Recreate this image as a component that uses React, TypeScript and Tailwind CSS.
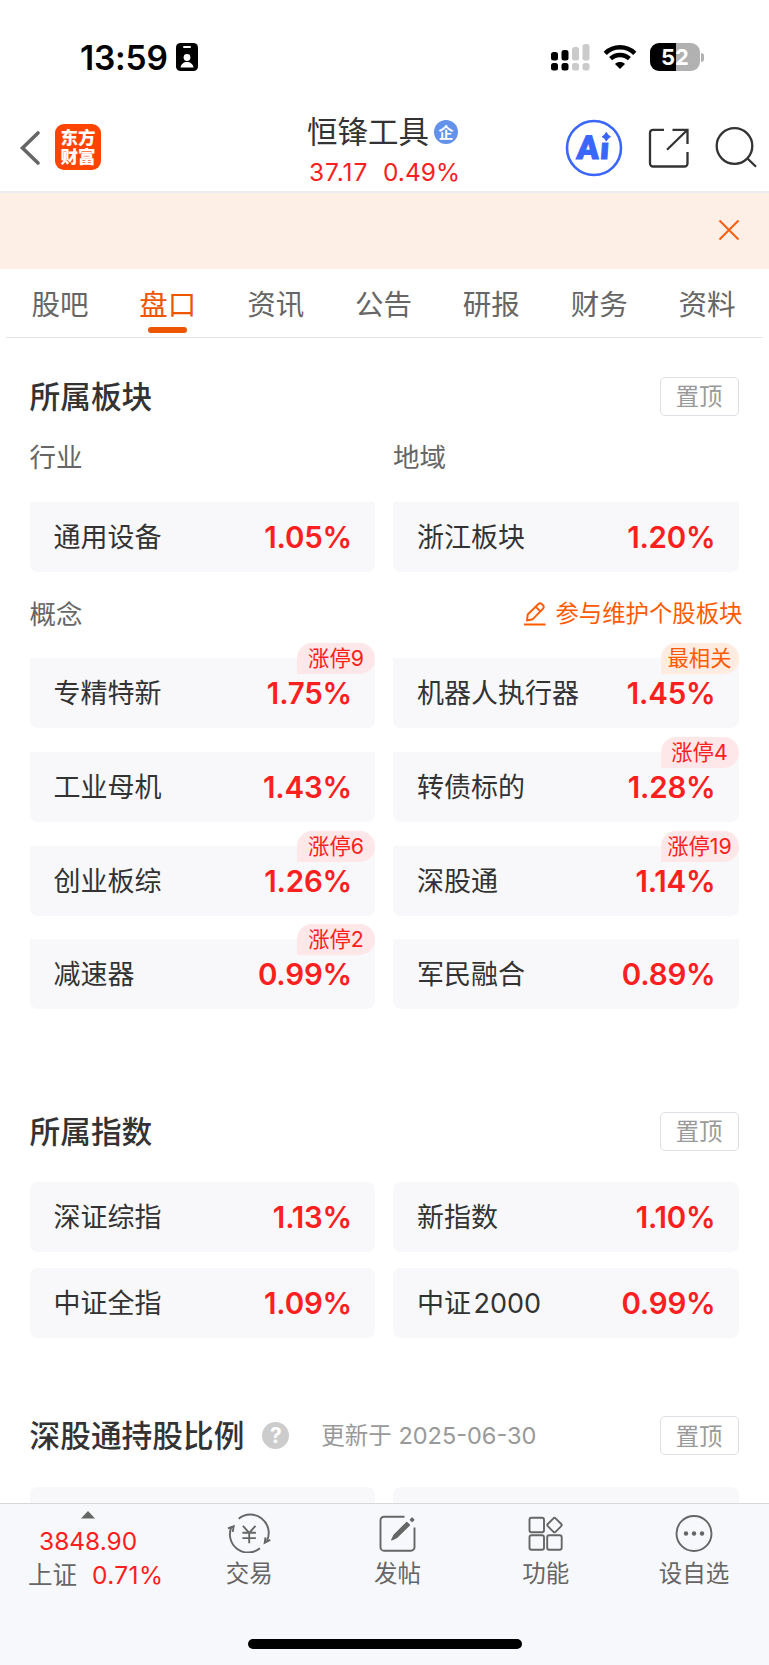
import type { ReactNode } from "react";

type Board = { name: string; change: string; tag?: string; hot?: boolean };

const tabs = ["股吧", "盘口", "资讯", "公告", "研报", "财务", "资料"];

const sectors: Board[] = [
  { name: "通用设备", change: "1.05%" },
  { name: "浙江板块", change: "1.20%" },
];

const concepts: Board[] = [
  { name: "专精特新", change: "1.75%", tag: "涨停9" },
  { name: "机器人执行器", change: "1.45%", tag: "最相关", hot: true },
  { name: "工业母机", change: "1.43%" },
  { name: "转债标的", change: "1.28%", tag: "涨停4" },
  { name: "创业板综", change: "1.26%", tag: "涨停6" },
  { name: "深股通", change: "1.14%", tag: "涨停19" },
  { name: "减速器", change: "0.99%", tag: "涨停2" },
  { name: "军民融合", change: "0.89%" },
];

const indexes: Board[] = [
  { name: "深证综指", change: "1.13%" },
  { name: "新指数", change: "1.10%" },
  { name: "中证全指", change: "1.09%" },
  { name: "中证\u200a2000", change: "0.99%" },
];

function StatusBar() {
  return (
    <div className="flex h-[105px] items-start pl-[80px] pr-[65px] pt-[37px] text-black">
      <span className="w-[96px] pt-px text-[33.500px] font-semibold leading-[40px] tracking-[-0.200px]">13:59</span>
      <svg className="mt-[6px]" width="22" height="28" viewBox="0 0 22 28">
        <rect width="22" height="28" rx="4.500" fill="#000" />
        <rect x="7" y="3" width="8" height="2" rx="1" fill="#fff" />
        <circle cx="11" cy="14.500" r="3.400" fill="#fff" />
        <path d="M4.500 24.500c.6-3.600 3.300-5.500 6.500-5.500s5.900 1.900 6.500 5.500z" fill="#fff" />
      </svg>
      <div className="ml-auto flex items-start pt-[6px]">
        <svg width="39" height="28" viewBox="0 0 39 28">
          <g fill="#000">
            <rect x="0" y="9" width="7" height="8.500" rx="2.500" />
            <rect x="10.500" y="7" width="7" height="10.500" rx="2.500" />
            <rect x="0" y="20" width="7" height="7.500" rx="2.500" />
            <rect x="10.500" y="20" width="7" height="7.500" rx="2.500" />
          </g>
          <g fill="#cacaca">
            <rect x="21" y="4" width="7" height="13.500" rx="2.500" />
            <rect x="31.500" y="1" width="7" height="16.500" rx="2.500" />
            <rect x="21" y="20" width="7" height="7.500" rx="2.500" />
            <rect x="31.500" y="20" width="7" height="7.500" rx="2.500" />
          </g>
        </svg>
        <svg className="ml-[13px] mt-[1px]" width="34" height="26" viewBox="0 0 34 26">
          <path d="M2.200 9.300C10.500 1.300 23.500 1.300 31.800 9.300" fill="none" stroke="#000" strokeWidth="4.600" />
          <path d="M7.600 14.700c5.300-5 13.500-5 18.800 0" fill="none" stroke="#000" strokeWidth="4.400" />
          <path d="M17 25l-5-5c2.800-2.600 7.200-2.600 10 0z" fill="#000" />
        </svg>
        <div className="ml-[13px] flex items-center">
          <div className="flex h-[28px] w-[50px] items-center justify-center rounded-[9px] bg-[linear-gradient(90deg,#000_52%,#b1b1b1_52%)] text-[22px] font-bold leading-[28px] text-white">
            52
          </div>
          <div className="ml-[1px] h-[9px] w-[3px] rounded-r-full bg-[#b1b1b1]" />
        </div>
      </div>
    </div>
  );
}

function Header() {
  return (
    <div className="flex h-[88px] shrink-0 items-start border-b-2 border-[#ececf0]">
      <svg className="ml-[18px] mt-[25px]" width="24" height="36" viewBox="0 0 24 36" fill="none" stroke="#666" strokeWidth="3.600">
        <path d="M20 3L4.500 18L20 33" strokeLinecap="round" />
      </svg>
      <div className="ml-[13px] mt-[19px] flex h-[46px] w-[46px] flex-col items-center justify-center rounded-[9px] bg-[#ff4400] text-[17.500px] font-black leading-[19px] text-white">
        <span>东方</span>
        <span>财富</span>
      </div>
      <div className="ml-[206px] w-[153px] pt-[7px]">
        <div className="flex h-[40px] items-center text-[30.500px] leading-[40px] text-[#333]">
          <span className="whitespace-nowrap">恒锋工具</span>
          <span className="ml-[5px] flex h-[24px] w-[24px] shrink-0 items-center justify-center rounded-full bg-[#6492ea] text-[15px] font-bold leading-none text-white">
            企
          </span>
        </div>
        <div className="flex h-[40px] items-center justify-between pl-[2px] text-[24.500px] leading-[40px] text-[#fa2020]">
          <span className="tracking-[0.900px]">37.17</span>
          <span>0.49%</span>
        </div>
      </div>
      <svg className="ml-[105px] mt-[14px]" width="58" height="58" viewBox="565 119 58 58">
        <circle cx="594" cy="148" r="27" fill="none" stroke="#3a66fb" strokeWidth="2.600" />
        <g transform="translate(576 158.500) skewX(-4)">
          <text x="0" y="0" className="font-['Roboto'] text-[33px] font-black" fill="#3a66fb" stroke="#3a66fb" strokeWidth="1">
            A<tspan dx="1">i</tspan>
          </text>
        </g>
        <rect x="600" y="131" width="14" height="11.500" fill="#fff" />
        <path d="M606.300 132.300q1.200 3.200 4.200 4.400-3 1.200-4.200 4.400-1.200-3.200-4.200-4.400 3-1.200 4.200-4.400z" fill="#3a66fb" stroke="#3a66fb" strokeWidth="1" />
      </svg>
      <svg className="ml-[25px] mt-[22px]" width="42" height="42" viewBox="648 127 42 42" fill="none" stroke="#333" strokeWidth="2.300">
        <path d="M664 129.800h-11a3 3 0 0 0-3 3v30.700a3 3 0 0 0 3 3h31.500a3 3 0 0 0 3-3V152" />
        <path d="M672.500 129.800h15V144M687.500 129.800L667 149.800" />
      </svg>
      <svg className="ml-[25px] mt-[21px]" width="44" height="44" viewBox="715 126 44 44" fill="none" stroke="#333" strokeWidth="2.300">
        <circle cx="734.500" cy="146" r="17.800" />
        <path d="M747.500 158.500l8.500 8.300" />
      </svg>
    </div>
  );
}

function SectionTitle({ title, children }: { title: string; children?: ReactNode }) {
  return (
    <div className="flex h-[40px] items-center">
      <h2 className="pt-px text-[30.700px] font-medium leading-[40px] text-[#333]">{title}</h2>
      {children}
      <button className="ml-auto h-[39px] w-[79px] rounded-[5px] border border-[#dfdfe5] pt-px text-[23.300px] leading-[35px] text-[#999]">
        置顶
      </button>
    </div>
  );
}

function BoardCard({ name, change, tag, hot, rounded }: Board & { rounded?: boolean }) {
  return (
    <div
      className={`relative flex h-[70px] items-center justify-between bg-[#f8f8fb] pl-[24px] pr-[23px] ${
        rounded ? "rounded-[8px]" : "rounded-b-[8px]"
      }`}
    >
      <span className="pt-[2px] text-[27px] leading-[40px] text-[#333]">{name}</span>
      <span className="text-[29.500px] font-semibold leading-[40px] tracking-[-0.200px] text-[#fa2020]">{change}</span>
      {tag && (
        <span
          className={`absolute -top-[15px] right-0 h-[31px] w-[78px] rounded-t-[15px] rounded-br-[15px] text-center text-[21.300px] leading-[31px] ${
            hot ? "bg-[#ffece1] text-[#ff5a00]" : "bg-[#fee7e8] text-[#fa2020]"
          }`}
        >
          {tag}
        </span>
      )}
    </div>
  );
}

function NavItem({ label, children }: { label: string; children: ReactNode }) {
  return (
    <div className="flex w-[148.300px] flex-col items-center pt-[9px]">
      <svg width="44" height="40" viewBox="0 0 44 40" fill="none" stroke="#666" strokeWidth="1.900">
        {children}
      </svg>
      <span className="mt-[4px] text-[23.500px] leading-[34px] text-[#666]">{label}</span>
    </div>
  );
}

function BottomBar() {
  return (
    <div className="flex h-[162px] shrink-0 flex-col border-t border-[#d6d7da] bg-[#f7f8fb]">
      <div className="flex h-[135px]">
        <div className="flex w-[175px] flex-col pt-[7px]">
          <svg className="ml-[81px]" width="14" height="8" viewBox="0 0 14 8">
            <path d="M7 0l7 7.500H0z" fill="#666" />
          </svg>
          <span className="ml-[39px] mt-[5px] text-[24.500px] leading-[34px] text-[#fa2020]">3848.90</span>
          <div className="flex pl-[28px] text-[24.500px] leading-[34px]">
            <span className="w-[64px] text-[#666]">上证</span>
            <span className="tracking-[0.400px] text-[#fa2020]">0.71%</span>
          </div>
        </div>
        <NavItem label="交易">
          <g transform="translate(-.6 .8)">
            <path d="M12.300 5A18.300 18.300 0 0 1 40.500 27M43.800 26l-5.500 3 .8-5.500M33.500 34.500A18.300 18.300 0 0 1 5.300 12.500M1.500 14.500l5.800-2-1 5.500" />
            <path d="M16.500 12l6.300 7 6.300-7M22.800 19V29.500M16 19h13.500M16 24.300h13.500" />
          </g>
        </NavItem>
        <NavItem label="发帖">
          <path d="M29.500 3.700H9a3.500 3.500 0 0 0-3.500 3.500v27a3.500 3.500 0 0 0 3.500 3.500h27a3.500 3.500 0 0 0 3.500-3.500V14.500" />
          <path d="M16.700 27l2.200-4.800L31.800 9.300l2.700 2.700-13 12.800zM35.300 6.800l1.800-1.800 1.800 1.800-1.800 1.800z" fill="#666" strokeWidth="1.200" strokeLinejoin="round" />
        </NavItem>
        <NavItem label="功能">
          <rect x="5.500" y="4.800" width="14.500" height="14.500" rx="2" />
          <rect x="5.500" y="22.300" width="14.500" height="14.500" rx="2" />
          <rect x="23.200" y="22.300" width="14.500" height="14.500" rx="2" />
          <rect x="25" y="6.600" width="11" height="11" rx="1.500" transform="rotate(45 30.500 12.100)" />
        </NavItem>
        <NavItem label="设自选">
          <circle cx="22" cy="20.500" r="17.500" />
          <g fill="#666" stroke="none">
            <circle cx="14" cy="20.500" r="2.200" />
            <circle cx="22" cy="20.500" r="2.200" />
            <circle cx="30" cy="20.500" r="2.200" />
          </g>
        </NavItem>
      </div>
      <div className="mx-auto h-[10px] w-[274px] rounded-full bg-black" />
    </div>
  );
}

export default function App() {
  return (
    <div className="flex h-[1665px] w-[769px] flex-col overflow-hidden bg-white font-['Inter','Noto_Sans_CJK_SC',sans-serif]">
      <StatusBar />
      <Header />

      <div className="flex h-[76px] shrink-0 items-start justify-end bg-[#fdeee6] pr-[29px] pt-[26px]">
        <svg width="22" height="22" viewBox="0 0 22 22" stroke="#f5600f" strokeWidth="2">
          <path d="M1.500 1.500l19 19M20.500 1.500l-19 19" />
        </svg>
      </div>

      <div className="mx-[6px] flex h-[69px] shrink-0 border-b border-[#e4e4e6] pr-[2px]">
        {tabs.map((tab) => (
          <div
            key={tab}
            className={`flex flex-1 flex-col items-center pt-[16px] text-[28.500px] leading-[40px] ${
              tab === "盘口" ? "text-[#ee5500]" : "text-[#666]"
            }`}
          >
            {tab}
            {tab === "盘口" && <div className="mt-[2px] h-[6px] w-[39px] rounded-[3px] bg-[#ee5500]" />}
          </div>
        ))}
      </div>

      <div className="flex h-[1165px] flex-col overflow-hidden pl-[29.500px] pr-[30.500px] pt-[38px]">
        <SectionTitle title="所属板块" />
        <div className="mt-[22px] grid grid-cols-2 gap-x-[18px] text-[26.500px] leading-[38px] text-[#666]">
          <span>行业</span>
          <span>地域</span>
        </div>
        <div className="mt-[26px] grid grid-cols-2 gap-x-[18px]">
          {sectors.map((item) => (
            <BoardCard key={item.name} {...item} />
          ))}
        </div>

        <div className="-mr-[4px] mt-[22px] flex h-[40px] items-center">
          <span className="text-[26.500px] leading-[38px] text-[#666]">概念</span>
          <div className="ml-auto flex items-center pt-px text-[23.400px] leading-[38px] text-[#ff5a00]">
            <svg className="mr-[9px]" width="22" height="24" viewBox="0 0 22 24" fill="none" stroke="#ff5a00" strokeWidth="1.900">
              <path d="M3 18.500l.7-6L14.200 2.200a2.700 2.700 0 0 1 3.800 0l.8.8a2.700 2.700 0 0 1 0 3.800L8.600 17.300z" strokeLinejoin="round" />
              <path d="M11.800 4.800l4.500 4.500M0 22.500h21.500" />
            </svg>
            参与维护个股板块
          </div>
        </div>
        <div className="mt-[25px] grid grid-cols-2 gap-x-[18px] gap-y-[23.800px]">
          {concepts.map((item) => (
            <BoardCard key={item.name} {...item} />
          ))}
        </div>

        <div className="mt-[102px]">
          <SectionTitle title="所属指数" />
        </div>
        <div className="mt-[30.500px] grid grid-cols-2 gap-x-[18px] gap-y-[16px]">
          {indexes.map((item) => (
            <BoardCard key={item.name} {...item} rounded />
          ))}
        </div>

        <div className="mt-[78px]">
          <SectionTitle title="深股通持股比例">
            <span className="ml-[18px] flex h-[27px] w-[27px] items-center justify-center rounded-full bg-[#ccc] text-[21px] font-bold leading-none text-white">
              ?
            </span>
            <span className="ml-[32px] pt-px text-[23.500px] leading-[38px] text-[#999]">更新于 2025-06-30</span>
          </SectionTitle>
        </div>
        <div className="mt-[31px] grid shrink-0 grid-cols-2 gap-x-[18px]">
          <div className="h-[70px] rounded-[8px] bg-[#f8f8fb]" />
          <div className="h-[70px] rounded-[8px] bg-[#f8f8fb]" />
        </div>
      </div>

      <BottomBar />
    </div>
  );
}
